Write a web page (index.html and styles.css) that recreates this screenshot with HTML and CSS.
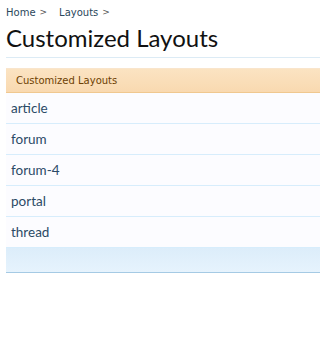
FILE: index.html
```html
<!DOCTYPE html>
<html>
<head>
<meta charset="utf-8">
<link rel="stylesheet" href="styles.css">
</head>
<body>
<div class="page">
  <nav class="breadcrumb">
    <span class="crumb">Home</span><span class="arrow">&gt;</span>
    <span class="crumb">Layouts</span><span class="arrow">&gt;</span>
  </nav>
  <h1 class="title">Customized Layouts</h1>
  <div class="section">
    <div class="section-header">Customized Layouts</div>
    <ul class="rows">
      <li class="row">article</li>
      <li class="row">forum</li>
      <li class="row">forum-4</li>
      <li class="row">portal</li>
      <li class="row">thread</li>
    </ul>
    <div class="section-footer"></div>
  </div>
</div>
</body>
</html>
```
FILE: styles.css
```css
html, body {
  margin: 0;
  padding: 0;
  background: #ffffff;
  overflow: hidden;
}
.page {
  margin-left: 6px;
  font-family: "DejaVu Sans", sans-serif;
}
.breadcrumb {
  display: flex;
  align-items: center;
  height: 12px;
  padding-top: 6px;
  font-size: 10px;
  color: #2b485c;
}
.crumb { margin-right: 4px; }
.arrow { margin-right: 12px; font-size: 9px; color: #555; }
.title {
  margin: 4px 0 0 0;
  height: 35px;
  font-family: "Lato", sans-serif;
  font-weight: normal;
  font-size: 24px;
  line-height: 32px;
  color: #111;
  border-bottom: 1px solid #dcebf5;
}
.section {
  margin-top: 10px;
}
.section-header {
  height: 23px;
  line-height: 23px;
  padding-left: 10px;
  font-size: 10px;
  color: #6d3f03;
  background: linear-gradient(to bottom, #fbe3c2, #f9d9b0);
  border-top: 1px solid #f9e5cc;
  border-bottom: 1px solid #f0c890;
}
.rows {
  list-style: none;
  margin: 0;
  padding: 0;
}
.row {
  height: 30px;
  line-height: 30px;
  padding-left: 5px;
  font-family: "Lato", sans-serif;
  font-size: 13.5px;
  color: #2b4a66;
  background: #fcfcff;
  border-bottom: 1px solid #d7edfc;
}
.section-footer {
  height: 24px;
  background: linear-gradient(to bottom, #dcedfa, #e6f3fd);
  border-bottom: 1px solid #a5cae4;
}
```
